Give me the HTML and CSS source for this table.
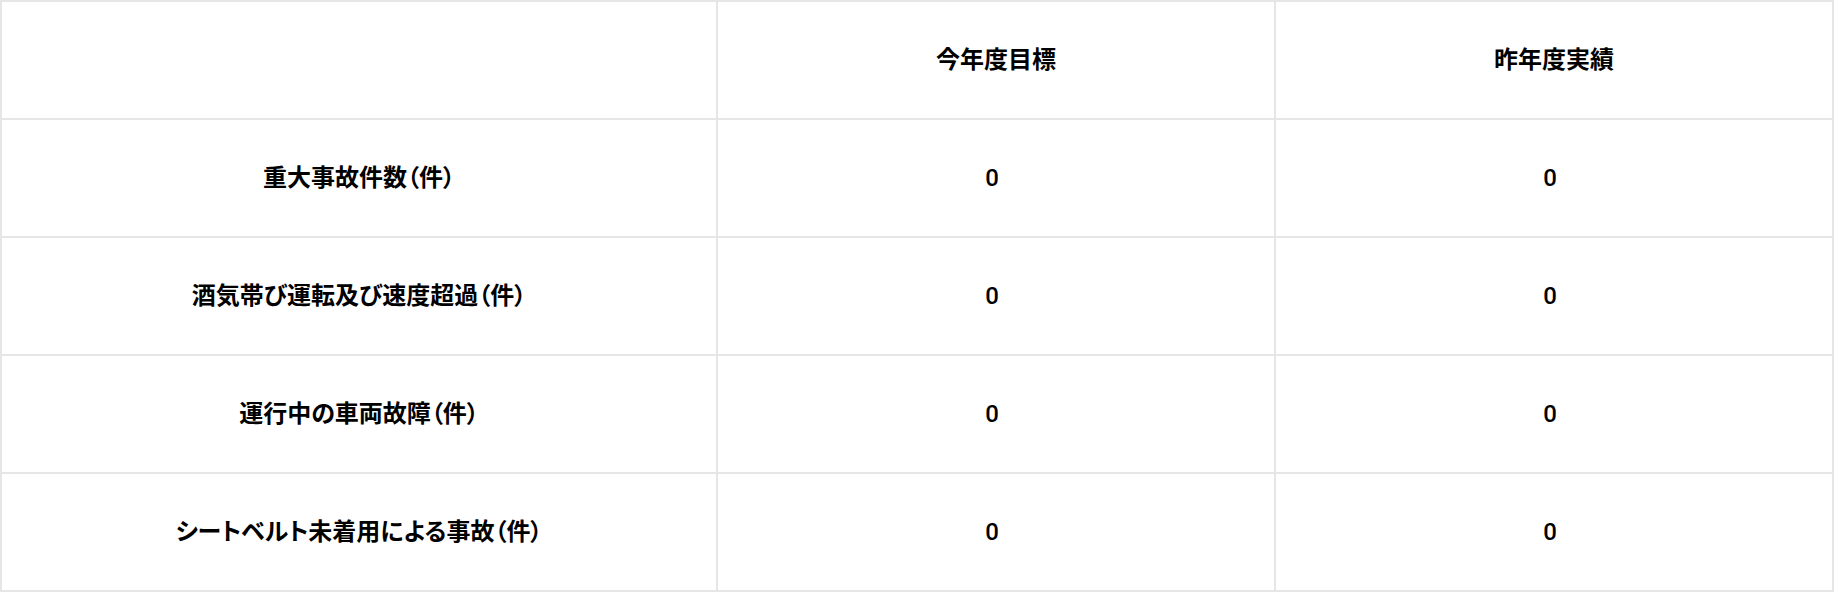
FILE: index.html
```html
<!DOCTYPE html>
<html lang="ja">
<head>
<meta charset="utf-8">
<title>目標と実績</title>
<link rel="stylesheet" href="styles.css">
</head>
<body>
<div class="table">
  <div class="cell"></div>
  <div class="cell">今年度目標</div>
  <div class="cell">昨年度実績</div>

  <div class="cell">重大事故件数（件）</div>
  <div class="cell num">0</div>
  <div class="cell num">0</div>

  <div class="cell">酒気帯び運転及び速度超過（件）</div>
  <div class="cell num">0</div>
  <div class="cell num">0</div>

  <div class="cell">運行中の車両故障（件）</div>
  <div class="cell num">0</div>
  <div class="cell num">0</div>

  <div class="cell">シートベルト未着用による事故（件）</div>
  <div class="cell num">0</div>
  <div class="cell num">0</div>
</div>
</body>
</html>
```

FILE: styles.css
```css
html, body {
  margin: 0;
  padding: 0;
  background: #ffffff;
}

.table {
  display: grid;
  grid-template-columns: 714fr 556fr 556fr;
  grid-auto-rows: 116px;
  gap: 2px;
  padding: 2px;
  background: #e6e6e6;
  font-family: Roboto, "Noto Sans CJK JP", sans-serif;
  font-weight: 700;
  font-size: 24px;
  color: #000;
  font-feature-settings: "palt";
}

.cell {
  background: #ffffff;
  display: flex;
  align-items: center;
  justify-content: center;
  line-height: 1;
}

.num {
  font-weight: 500;
  padding-right: 8px;
}
```
